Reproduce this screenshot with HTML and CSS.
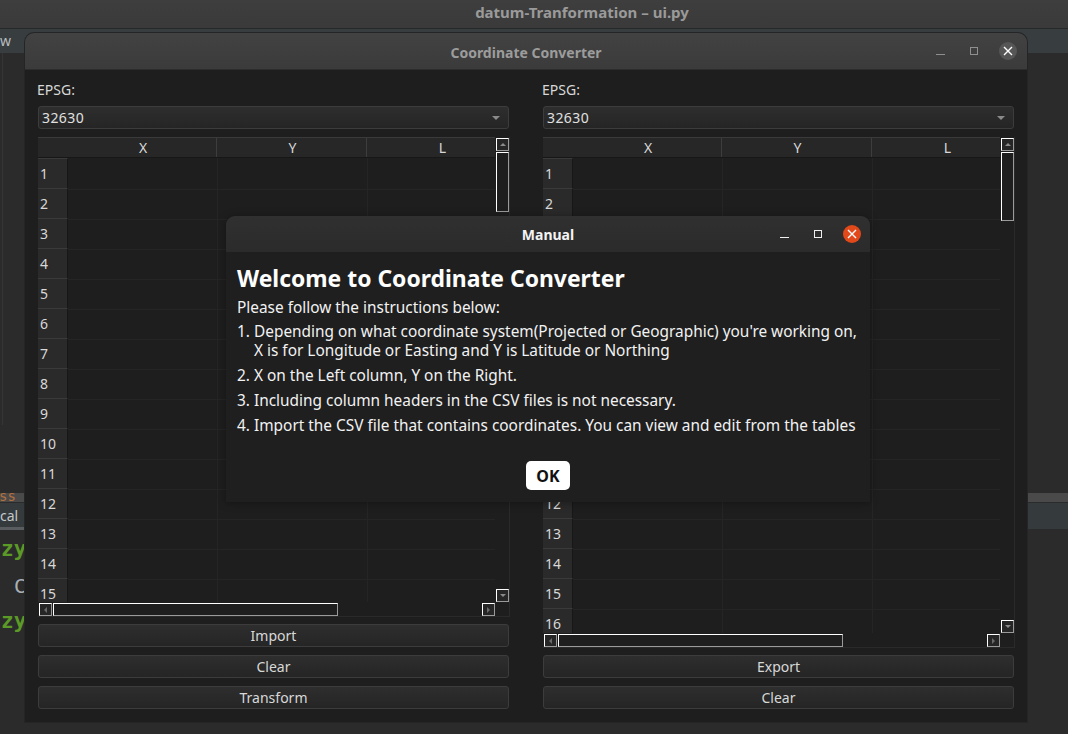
FILE: index.html
```html
<!DOCTYPE html>
<html lang="en">
<head>
    <meta charset="UTF-8">
    <title>Coordinate Converter</title>
    <link rel="stylesheet" href="styles.css">
</head>
<body>
    <!-- IDE behind the windows -->
    <div class="ide">
        <div class="ide-title">datum-Tranformation – ui.py</div>
        <div class="ide-menu"><span>w</span><span class="underlined">N</span></div>
        <div class="ide-gutter"></div>
        <div class="ide-panel-bar left-bar"></div>
        <div class="ide-tab left-tab">cal</div>
        <div class="ide-panel-bar right-bar"></div>
        <div class="ide-tab right-tab"></div>
        <div class="ide-text orange">ss</div>
        <div class="ide-text green zy1">zy</div>
        <div class="ide-text grey">C</div>
        <div class="ide-text green zy2">zy</div>
    </div>

    <!-- Main window -->
    <div class="window main-window">
        <div class="titlebar main-titlebar">
            <span class="title">Coordinate Converter</span>
            <div class="controls">
                <span class="ctl-min"></span>
                <span class="ctl-max"></span>
                <span class="ctl-close">
                    <svg width="10" height="10" viewBox="0 0 10 10"><path d="M1 1L9 9M9 1L1 9" stroke="#fff" stroke-width="1.4"/></svg>
                </span>
            </div>
        </div>
        <div class="columns">
            <div class="column">
                <div class="epsg-label">EPSG:</div>
                <div class="combo"><span>32630</span><i class="combo-arrow"></i></div>
                <div class="table">
                    <div class="viewport">
                        <div class="row header-row"><div class="corner"></div><div class="head">X</div><div class="head">Y</div><div class="head">L</div></div>
                        <div class="row"><div class="num">1</div><div class="cell"></div><div class="cell"></div><div class="cell"></div></div>
                        <div class="row"><div class="num">2</div><div class="cell"></div><div class="cell"></div><div class="cell"></div></div>
                        <div class="row"><div class="num">3</div><div class="cell"></div><div class="cell"></div><div class="cell"></div></div>
                        <div class="row"><div class="num">4</div><div class="cell"></div><div class="cell"></div><div class="cell"></div></div>
                        <div class="row"><div class="num">5</div><div class="cell"></div><div class="cell"></div><div class="cell"></div></div>
                        <div class="row"><div class="num">6</div><div class="cell"></div><div class="cell"></div><div class="cell"></div></div>
                        <div class="row"><div class="num">7</div><div class="cell"></div><div class="cell"></div><div class="cell"></div></div>
                        <div class="row"><div class="num">8</div><div class="cell"></div><div class="cell"></div><div class="cell"></div></div>
                        <div class="row"><div class="num">9</div><div class="cell"></div><div class="cell"></div><div class="cell"></div></div>
                        <div class="row"><div class="num">10</div><div class="cell"></div><div class="cell"></div><div class="cell"></div></div>
                        <div class="row"><div class="num">11</div><div class="cell"></div><div class="cell"></div><div class="cell"></div></div>
                        <div class="row"><div class="num">12</div><div class="cell"></div><div class="cell"></div><div class="cell"></div></div>
                        <div class="row"><div class="num">13</div><div class="cell"></div><div class="cell"></div><div class="cell"></div></div>
                        <div class="row"><div class="num">14</div><div class="cell"></div><div class="cell"></div><div class="cell"></div></div>
                        <div class="row"><div class="num">15</div><div class="cell"></div><div class="cell"></div><div class="cell"></div></div>
                    </div>
                    <div class="vscroll">
                        <div class="sb-btn"><i class="arrow-up"></i></div>
                        <div class="sb-thumb v-thumb left-thumb"></div>
                        <div class="sb-btn sb-end"><i class="arrow-down"></i></div>
                    </div>
                    <div class="hscroll">
                        <div class="sb-btn"><i class="arrow-left"></i></div>
                        <div class="sb-thumb h-thumb"></div>
                        <div class="sb-btn sb-end"><i class="arrow-right"></i></div>
                    </div>
                </div>
                <div class="buttons">
                    <button>Import</button>
                    <button>Clear</button>
                    <button>Transform</button>
                </div>
            </div>
            <div class="column">
                <div class="epsg-label">EPSG:</div>
                <div class="combo"><span>32630</span><i class="combo-arrow"></i></div>
                <div class="table tall-table">
                    <div class="viewport">
                        <div class="row header-row"><div class="corner"></div><div class="head">X</div><div class="head">Y</div><div class="head">L</div></div>
                        <div class="row"><div class="num">1</div><div class="cell"></div><div class="cell"></div><div class="cell"></div></div>
                        <div class="row"><div class="num">2</div><div class="cell"></div><div class="cell"></div><div class="cell"></div></div>
                        <div class="row"><div class="num">3</div><div class="cell"></div><div class="cell"></div><div class="cell"></div></div>
                        <div class="row"><div class="num">4</div><div class="cell"></div><div class="cell"></div><div class="cell"></div></div>
                        <div class="row"><div class="num">5</div><div class="cell"></div><div class="cell"></div><div class="cell"></div></div>
                        <div class="row"><div class="num">6</div><div class="cell"></div><div class="cell"></div><div class="cell"></div></div>
                        <div class="row"><div class="num">7</div><div class="cell"></div><div class="cell"></div><div class="cell"></div></div>
                        <div class="row"><div class="num">8</div><div class="cell"></div><div class="cell"></div><div class="cell"></div></div>
                        <div class="row"><div class="num">9</div><div class="cell"></div><div class="cell"></div><div class="cell"></div></div>
                        <div class="row"><div class="num">10</div><div class="cell"></div><div class="cell"></div><div class="cell"></div></div>
                        <div class="row"><div class="num">11</div><div class="cell"></div><div class="cell"></div><div class="cell"></div></div>
                        <div class="row"><div class="num">12</div><div class="cell"></div><div class="cell"></div><div class="cell"></div></div>
                        <div class="row"><div class="num">13</div><div class="cell"></div><div class="cell"></div><div class="cell"></div></div>
                        <div class="row"><div class="num">14</div><div class="cell"></div><div class="cell"></div><div class="cell"></div></div>
                        <div class="row"><div class="num">15</div><div class="cell"></div><div class="cell"></div><div class="cell"></div></div>
                        <div class="row"><div class="num">16</div><div class="cell"></div><div class="cell"></div><div class="cell"></div></div>
                    </div>
                    <div class="vscroll">
                        <div class="sb-btn"><i class="arrow-up"></i></div>
                        <div class="sb-thumb v-thumb right-thumb"></div>
                        <div class="sb-btn sb-end"><i class="arrow-down"></i></div>
                    </div>
                    <div class="hscroll">
                        <div class="sb-btn"><i class="arrow-left"></i></div>
                        <div class="sb-thumb h-thumb"></div>
                        <div class="sb-btn sb-end"><i class="arrow-right"></i></div>
                    </div>
                </div>
                <div class="buttons">
                    <button>Export</button>
                    <button>Clear</button>
                </div>
            </div>
        </div>
    </div>

    <!-- Manual dialog -->
    <div class="window dialog">
        <div class="titlebar dialog-titlebar">
            <span class="title">Manual</span>
            <div class="controls">
                <span class="ctl-min"></span>
                <span class="ctl-max"></span>
                <span class="ctl-close">
                    <svg width="10" height="10" viewBox="0 0 10 10"><path d="M1 1L9 9M9 1L1 9" stroke="#fff" stroke-width="1.4"/></svg>
                </span>
            </div>
        </div>
        <div class="dialog-body">
            <h1>Welcome to Coordinate Converter</h1>
            <p>Please follow the instructions below:</p>
            <ol>
                <li>Depending on what coordinate system(Projected or Geographic) you're working on,<br>X is for Longitude or Easting and Y is Latitude or Northing</li>
                <li>X on the Left column, Y on the Right.</li>
                <li>Including column headers in the CSV files is not necessary.</li>
                <li>Import the CSV file that contains coordinates. You can view and edit from the tables</li>
            </ol>
            <div class="dialog-actions"><button class="ok-button">OK</button></div>
        </div>
    </div>
</body>
</html>
```

FILE: styles.css
```css
html, body {
    margin: 0;
    height: 734px;
    overflow: hidden;
}
body {
    position: relative;
    background-color: #2b2b2c;
    color: #e0e0e0;
    font-family: "Noto Sans", sans-serif;
    font-size: 14px;
}

/* IDE behind */
.ide {
    position: absolute;
    inset: 0;
    overflow: hidden;
}
.ide-title {
    height: 29px;
    line-height: 24px;
    text-align: center;
    font-size: 15px;
    font-weight: bold;
    color: #9a9a9a;
    background: linear-gradient(#3e3e3e, #3a3a3a);
    border-bottom: 1px solid #262829;
    padding-left: 96px;
    box-sizing: border-box;
}
.ide-menu {
    display: flex;
    gap: 14px;
    height: 24px;
    line-height: 24px;
    background-color: #383d40;
    color: #b8bcbe;
    font-size: 14px;
}
.underlined {
    text-decoration: underline;
}
.ide-gutter {
    position: absolute;
    left: 2px;
    top: 53px;
    width: 1px;
    height: 372px;
    background-color: #343536;
}
.ide-panel-bar {
    position: absolute;
    top: 493px;
    height: 9px;
    background-color: #4a4a4a;
}
.left-bar {
    left: 0;
    width: 25px;
}
.right-bar {
    left: 1027px;
    width: 41px;
}
.ide-tab {
    position: absolute;
    top: 503px;
    height: 26px;
    line-height: 25px;
    background-color: #353a3d;
    color: #c4c8ca;
    font-size: 14px;
}
.left-tab {
    left: 0;
    width: 25px;
    border-bottom: 3px solid #5a5d5f;
    height: 24px;
}
.right-tab {
    left: 1027px;
    width: 41px;
}
.ide-text {
    position: absolute;
    font-family: "DejaVu Sans Mono", monospace;
    font-size: 20px;
    line-height: 24px;
}
.orange {
    top: 484px;
    left: -1px;
    color: #b5703e;
    font-size: 14px;
}
.green {
    left: 1px;
    color: #5b9a26;
    font-weight: bold;
    font-size: 21px;
}
.zy1 {
    top: 537px;
}
.zy2 {
    top: 609px;
}
.grey {
    top: 574px;
    left: 14px;
    color: #a9b0b4;
}

/* Windows */
.window {
    position: absolute;
    box-sizing: border-box;
    border-radius: 9px 9px 0 0;
    background-color: #1e1e1e;
}
.main-window {
    left: 25px;
    top: 33px;
    width: 1002px;
    height: 689px;
    box-shadow: 0 0 0 1px #242526;
}
.dialog {
    left: 226px;
    top: 216px;
    width: 644px;
    height: 286px;
    background-color: #1f1f1f;
    box-shadow: 0 1px 8px rgba(0, 0, 0, 0.35);
}
.titlebar {
    position: relative;
    display: flex;
    align-items: center;
    justify-content: center;
    box-sizing: border-box;
    border-radius: 9px 9px 0 0;
    font-weight: bold;
    font-size: 14px;
}
.main-titlebar {
    height: 37px;
    padding-top: 2px;
    background: linear-gradient(#424242, #3b3b3b);
    border-bottom: 1px solid #2c2c2c;
    color: #9c9c9c;
}
.dialog-titlebar {
    height: 36px;
    background: linear-gradient(#303030, #2b2b2b);
    color: #f4f4f4;
}
.controls {
    position: absolute;
    right: 9px;
    top: 0;
    bottom: 0;
    display: flex;
    align-items: center;
    gap: 21px;
}
.main-titlebar .controls {
    right: 10px;
}
.ctl-min {
    width: 9px;
    height: 1px;
    margin-top: 6px;
    margin-right: 4px;
    background-color: #8f8f8f;
}
.ctl-max {
    box-sizing: border-box;
    width: 8px;
    height: 8px;
    border: 1px solid #8f8f8f;
}
.ctl-close {
    width: 18px;
    height: 18px;
    border-radius: 50%;
    background-color: #565656;
    display: flex;
    align-items: center;
    justify-content: center;
}
.dialog-titlebar .ctl-min {
    background-color: #f0f0f0;
}
.dialog-titlebar .ctl-max {
    border-color: #f0f0f0;
}
.dialog-titlebar .ctl-close {
    background-color: #e2491a;
}

/* Converter columns */
.columns {
    display: flex;
    gap: 34px;
    padding: 0 13px 0 13px;
}
.column {
    width: 471px;
}
.epsg-label {
    margin-top: 11px;
    margin-left: -1px;
    height: 18px;
    line-height: 18px;
    color: #d8d8d8;
}
.combo {
    display: flex;
    align-items: center;
    justify-content: space-between;
    box-sizing: border-box;
    height: 23px;
    margin-top: 7px;
    padding: 0 8px 0 3px;
    border: 1px solid #3c3c3c;
    border-radius: 3px;
    background: linear-gradient(#2e2e2e, #252525);
    letter-spacing: 0.4px;
}
.combo-arrow {
    border-left: 4px solid transparent;
    border-right: 4px solid transparent;
    border-top: 4px solid #8a8a8a;
}

/* Table */
.table {
    position: relative;
    box-sizing: border-box;
    width: 472px;
    height: 480px;
    margin-top: 8px;
    border-right: 1px solid #2a2a2a;
    border-bottom: 1px solid #2a2a2a;
}
.tall-table {
    height: 511px;
}
.viewport {
    position: absolute;
    left: 0;
    top: 0;
    right: 14px;
    bottom: 14px;
    overflow: hidden;
}
.row {
    display: grid;
    grid-template-columns: 30px 150px 150px 150px;
    height: 30px;
}
.header-row {
    grid-template-columns: 30px 149px 150px 150px;
    height: 21px;
    background-color: #272727;
    border-top: 1px solid #3a3a3a;
    border-bottom: 1px solid #171717;
    box-sizing: border-box;
}
.head {
    line-height: 19px;
    padding-left: 2px;
    text-align: center;
    border-right: 1px solid #3d3d3d;
    color: #d8d8d8;
}
.num {
    line-height: 30px;
    padding-left: 2px;
    background-color: #2a2a2a;
    border-top: 1px solid #3a3a3a;
    border-bottom: 1px solid #171717;
    border-right: 1px solid #171717;
    box-sizing: border-box;
    color: #d8d8d8;
}
.cell {
    border-right: 1px solid #252525;
    border-bottom: 1px solid #252525;
}

/* Scrollbars */
.vscroll {
    position: absolute;
    top: 1px;
    right: 0;
    bottom: 14px;
    width: 13px;
    display: flex;
    flex-direction: column;
    gap: 1px;
}
.hscroll {
    position: absolute;
    left: 1px;
    right: 14px;
    bottom: 0;
    height: 13px;
    display: flex;
    gap: 1px;
}
.sb-btn {
    position: relative;
    box-sizing: border-box;
    flex: none;
    width: 13px;
    height: 13px;
    border: 1px solid #fff;
    border-right-color: #9a9a9a;
    border-bottom-color: #9a9a9a;
    background-color: #262626;
    display: flex;
    align-items: center;
    justify-content: center;
}
.sb-end {
    margin-top: auto;
}
.hscroll .sb-end {
    margin-top: 0;
    margin-left: auto;
}
.sb-thumb {
    box-sizing: border-box;
    border: 1px solid #fff;
    border-right-color: #9a9a9a;
    border-bottom-color: #9a9a9a;
    background-color: #1e1e1e;
}
.left-thumb {
    height: 60px;
}
.right-thumb {
    height: 69px;
}
.h-thumb {
    width: 285px;
}
.arrow-up, .arrow-down {
    border-left: 3px solid transparent;
    border-right: 3px solid transparent;
}
.arrow-up {
    border-bottom: 3px solid #8a8a8a;
}
.arrow-down {
    border-top: 3px solid #8a8a8a;
}
.arrow-left, .arrow-right {
    border-top: 3px solid transparent;
    border-bottom: 3px solid transparent;
}
.arrow-left {
    border-right: 3px solid #6a6a6a;
}
.arrow-right {
    border-left: 3px solid #6a6a6a;
}

/* Buttons */
.buttons {
    display: flex;
    flex-direction: column;
    gap: 8px;
    margin-top: 7px;
}
.buttons button {
    height: 23px;
    padding: 0;
    border: 1px solid #3c3c3c;
    border-radius: 3px;
    background: linear-gradient(#2e2e2e, #252525);
    color: #d8d8d8;
    font-family: "Noto Sans", sans-serif;
    font-size: 14px;
}

/* Dialog content */
.dialog-body {
    padding: 0 11px;
    color: #f2f2f2;
    font-size: 15.4px;
}
.dialog-body h1 {
    margin: 12px 0 0;
    font-size: 22.9px;
    line-height: 29px;
    color: #fff;
}
.dialog-body p {
    margin: 5px 0 0;
    line-height: 20px;
}
.dialog-body ol {
    margin: 4px 0 0;
    padding-left: 17px;
}
.dialog-body li {
    line-height: 19px;
    margin-bottom: 6px;
}
.dialog-actions {
    display: flex;
    justify-content: center;
    margin-top: 26px;
}
.ok-button {
    width: 44px;
    height: 29px;
    padding: 0;
    border: none;
    border-radius: 5px;
    background-color: #fff;
    color: #111;
    font-family: "Noto Sans", sans-serif;
    font-size: 16px;
    font-weight: bold;
}
```
